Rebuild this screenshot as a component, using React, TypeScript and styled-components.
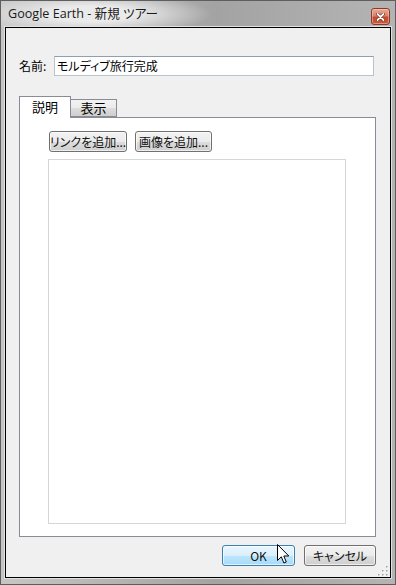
import React from "react";
import styled, {createGlobalStyle} from "styled-components";

const GlobalStyle = createGlobalStyle`
  html, body {
    margin: 0;
    padding: 0;
    background: #fff;
  }
  body {
    font-family: "Noto Sans CJK JP", sans-serif;
  }
`;

const Window = styled.div`
  position: relative;
  width: 396px;
  height: 585px;
  box-sizing: border-box;
  border: 1px solid #5e5e5e;
  padding: 0 4px 6px 4px;
  display: flex;
  flex-direction: column;
  background: radial-gradient(
      ellipse 120px 22px at 90px 13px,
      rgba(236, 236, 236, 0.97) 35%,
      rgba(236, 236, 236, 0) 100%
    ),
    linear-gradient(to right, #c6c6c6 0, #a3a3a3 55%, #b4b4b4 100%);
`;

const TitleBar = styled.div`
  height: 26px;
  display: flex;
  align-items: flex-start;
  padding-left: 3px;
`;

const TitleText = styled.span`
  margin-top: 4px;
  font-family: "Open Sans", "Noto Sans CJK JP", sans-serif;
  font-size: 12.6px;
  line-height: 17px;
  color: #1a1a1a;
  font-feature-settings: "palt";
`;

const CloseButton = styled.div`
  margin: 7px 1px 0 auto;
  width: 19px;
  height: 17px;
  box-sizing: border-box;
  border: 1px solid #8a3b28;
  border-radius: 3px;
  display: flex;
  align-items: center;
  justify-content: center;
  background: linear-gradient(#eaa995 0%, #d9826b 45%, #c34b2e 55%, #c9583b 100%);
  box-shadow: inset 0 0 0 1px rgba(255, 220, 210, 0.45);
`;

const Client = styled.div`
  flex: 1;
  position: relative;
  background: #f0f0f0;
  border: 1px solid #000;
  box-shadow: 0 0 0 1px #e2e2e2;
  display: flex;
  flex-direction: column;
  padding: 28px 14px 11px 13px;
`;

const NameRow = styled.div`
  display: flex;
  align-items: center;
  height: 20px;
`;

const Label = styled.span`
  width: 35px;
  font-size: 12px;
  line-height: 16px;
  font-feature-settings: "palt";
  color: #000;
`;

const TextInput = styled.div`
  width: 320px;
  height: 20px;
  box-sizing: border-box;
  border: 1px solid #b7c3cf;
  border-top-color: #8e9fb0;
  background: #fff;
  padding-left: 2px;
  font-size: 12px;
  line-height: 18px;
  font-feature-settings: "palt";
  color: #000;
`;

const TabStrip = styled.div`
  display: flex;
  align-items: flex-end;
  margin-top: 21px;
  height: 21px;
  margin-bottom: -1px;
  position: relative;
  z-index: 1;
`;

const Tab = styled.div<{$active?: boolean}>`
  box-sizing: border-box;
  width: ${(p) => (p.$active ? 52 : 47)}px;
  height: ${(p) => (p.$active ? 22 : 18)}px;
  margin-left: ${(p) => (p.$active ? 0 : -1)}px;
  border: 1px solid #898c95;
  border-bottom: ${(p) => (p.$active ? "none" : "1px solid #898c95")};
  background: ${(p) =>
    p.$active ? "#fff" : "linear-gradient(#f2f2f2 0%, #ebebeb 50%, #dddddd 51%, #cfcfcf 100%)"};
  display: flex;
  align-items: center;
  justify-content: center;
  font-size: 13px;
  line-height: 16px;
  color: #000;
  padding-bottom: ${(p) => (p.$active ? 1 : 0)}px;
  ${(p) => (p.$active ? "" : "margin-bottom: 1px;")}
`;

const Panel = styled.div`
  flex: 1;
  display: flex;
  flex-direction: column;
  background: #fff;
  border: 1px solid #898c95;
  padding: 13px 0 12px 28px;
`;

const ButtonRow = styled.div`
  display: flex;
  gap: 8px;
  margin-left: 1px;
`;

const Button = styled.div<{$w: number; $hot?: boolean}>`
  width: ${(p) => p.$w}px;
  height: 21px;
  box-sizing: border-box;
  border: 1px solid ${(p) => (p.$hot ? "#3c7fb1" : "#707070")};
  border-radius: 3px;
  background: ${(p) =>
    p.$hot
      ? "linear-gradient(#eaf6fd 0%, #d9f0fc 50%, #bee6fd 51%, #a7d9f5 100%)"
      : "linear-gradient(#f2f2f2 0%, #ebebeb 50%, #dddddd 51%, #cfcfcf 100%)"};
  box-shadow: inset 0 0 0 1px rgba(255, 255, 255, 0.65);
  display: flex;
  align-items: center;
  justify-content: center;
  font-size: 12px;
  line-height: 16px;
  font-feature-settings: "palt";
  color: #111;
  white-space: nowrap;
`;

const TextArea = styled.div`
  margin-top: 7px;
  flex: 1;
  width: 298px;
  box-sizing: border-box;
  border: 1px solid #d6d6d6;
  background: #fff;
`;

const Footer = styled.div`
  display: flex;
  justify-content: flex-end;
  gap: 9px;
  margin-top: 8px;
`;

const Grip = styled.svg`
  position: absolute;
  right: 2px;
  bottom: 1px;
`;

const Cursor = styled.svg`
  position: absolute;
  left: 276px;
  top: 543px;
`;

const gripDots = [
  [8, 0],
  [8, 4],
  [4, 4],
  [8, 8],
  [4, 8],
  [0, 8],
];

export default function App() {
  return (
    <>
      <GlobalStyle />
      <Window>
        <TitleBar>
          <TitleText>Google Earth - 新規 ツアー</TitleText>
          <CloseButton>
            <svg width="9" height="8" viewBox="0 0 9 8">
              <path d="M1.5 1 L7.5 7 M7.5 1 L1.5 7" stroke="#5a1a0c" strokeWidth="3" strokeLinecap="round" />
              <path d="M1.5 1 L7.5 7 M7.5 1 L1.5 7" stroke="#fff" strokeWidth="1.8" strokeLinecap="round" />
            </svg>
          </CloseButton>
        </TitleBar>
        <Client>
          <NameRow>
            <Label>名前:</Label>
            <TextInput>モルディブ旅行完成</TextInput>
          </NameRow>
          <TabStrip>
            <Tab $active>説明</Tab>
            <Tab>表示</Tab>
          </TabStrip>
          <Panel>
            <ButtonRow>
              <Button $w={78}>リンクを追加...</Button>
              <Button $w={77}>画像を追加...</Button>
            </ButtonRow>
            <TextArea />
          </Panel>
          <Footer>
            <Button $w={73} $hot>
              OK
            </Button>
            <Button $w={72}>キャンセル</Button>
          </Footer>
          <Grip width="10" height="10" viewBox="0 0 10 10">
            {gripDots.map(([x, y]) => (
              <g key={`${x}-${y}`}>
                <rect x={x + 1} y={y + 1} width="1.5" height="1.5" fill="#fff" />
                <rect x={x} y={y} width="1.5" height="1.5" fill="#a0a0a0" />
              </g>
            ))}
          </Grip>
        </Client>
        <Cursor width="13" height="21" viewBox="0 0 13 21">
          <path
            d="M0.5 0.5 L0.5 16.5 L4.3 12.8 L6.9 19 L9.3 18 L6.8 12 L11.8 12 Z"
            fill="#fff"
            stroke="#000"
            strokeWidth="1"
            strokeLinejoin="miter"
          />
        </Cursor>
      </Window>
    </>
  );
}
